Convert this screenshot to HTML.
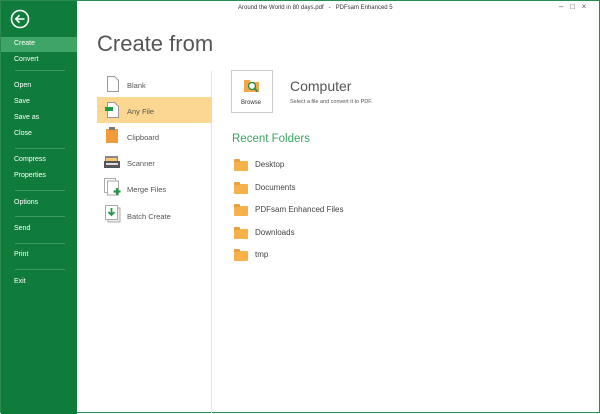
<!DOCTYPE html>
<html><head><style>
*{margin:0;padding:0;box-sizing:border-box}
body{width:600px;height:413px;overflow:hidden;font-family:"Liberation Sans",sans-serif;background:#fff;position:relative;border:1px solid #2a8a50}
.side{position:absolute;left:0;top:0;width:76px;height:413px;background:#107c3b}
.side div.i{position:absolute;left:13px;font-size:7px;color:#fff}
.sel{position:absolute;left:0;top:36px;width:76px;height:15px;background:#3fa567}
.sep{position:absolute;left:14px;width:50px;height:1px;background:#3d9863}
.t{position:absolute;font-size:7px;color:#333}
.l{position:absolute;left:126px;font-size:7.5px;color:#555}
.f{position:absolute;left:254px;font-size:8px;color:#444}
.fi{position:absolute;left:233px;width:14px;height:10px;background:#f6b24a;border-radius:1px}
.fi:before{content:"";position:absolute;left:0;top:-2px;width:6px;height:3px;background:#e9a03a;border-radius:1px 1px 0 0}
</style></head><body>
<div class="side">
<svg style="position:absolute;left:9px;top:8px" width="20" height="20" viewBox="0 0 20 20"><circle cx="10" cy="10" r="8.5" fill="none" stroke="#fff" stroke-width="1.6"/><path d="M14.5 10H6M9.5 6.3L5.8 10l3.7 3.7" fill="none" stroke="#fff" stroke-width="1.6"/></svg>
<div class="sel"></div>
<div class="i" style="top:39px">Create</div>
<div class="i" style="top:55px">Convert</div>
<div class="sep" style="top:69px"></div>
<div class="i" style="top:81px">Open</div>
<div class="i" style="top:97px">Save</div>
<div class="i" style="top:113px">Save as</div>
<div class="i" style="top:129px">Close</div>
<div class="sep" style="top:147px"></div>
<div class="i" style="top:155px">Compress</div>
<div class="i" style="top:171px">Properties</div>
<div class="sep" style="top:189px"></div>
<div class="i" style="top:198px">Options</div>
<div class="sep" style="top:215px"></div>
<div class="i" style="top:224px">Send</div>
<div class="sep" style="top:242px"></div>
<div class="i" style="top:250px">Print</div>
<div class="sep" style="top:268px"></div>
<div class="i" style="top:277px">Exit</div>
</div>
<div class="t" style="left:237px;top:4px;font-size:6px">Around the World in 80 days.pdf &nbsp;&nbsp;-&nbsp;&nbsp; PDFsam Enhanced 5</div>
<div class="t" style="left:558px;top:1px;font-size:8px;color:#555">–&nbsp;&nbsp;&nbsp;□&nbsp;&nbsp;&nbsp;×</div>
<div style="position:absolute;left:96px;top:30px;font-size:22px;color:#555">Create from</div>
<div style="position:absolute;left:210px;top:70px;width:1px;height:343px;background:#e4e4e4"></div>
<div style="position:absolute;left:96px;top:96px;width:115px;height:26px;background:#fcd791"></div>
<svg style="position:absolute;left:106px;top:75px" width="12" height="16"><path d="M.5 .5h7l4 4v11H.5z" fill="#fff" stroke="#999"/></svg>
<svg style="position:absolute;left:104px;top:101px" width="14" height="16"><path d="M2.5 .5h7l4 4v11h-11z" fill="#fff" stroke="#999"/><rect x="0" y="5" width="8" height="4" fill="#1e9a48"/></svg>
<svg style="position:absolute;left:105px;top:126px" width="12" height="16"><rect x="0" y="2" width="12" height="14" fill="#f09a3a"/><rect x="3" y="0" width="6" height="3" fill="#777"/></svg>
<svg style="position:absolute;left:103px;top:154px" width="16" height="14"><rect x="1" y="1" width="13" height="5" fill="#888"/><rect x="2" y="3" width="11" height="3" fill="#fbc36d"/><rect x="0" y="6" width="16" height="7" fill="#555"/><rect x="2" y="8" width="12" height="2" fill="#ddd"/></svg>
<svg style="position:absolute;left:103px;top:177px" width="18" height="18"><rect x=".5" y=".5" width="11" height="14" fill="#fff" stroke="#aaa"/><rect x="3.5" y="3" width="11" height="14" fill="#fff" stroke="#aaa"/><path d="M13 10v7M9.5 13.5h7" stroke="#1e9a48" stroke-width="2.2"/></svg>
<svg style="position:absolute;left:104px;top:204px" width="16" height="18"><rect x="3" y="3" width="12" height="14" fill="#eee" stroke="#aaa"/><rect x=".5" y=".5" width="12" height="14" fill="#fff" stroke="#aaa"/><path d="M6.5 3v7M3.5 7l3 3 3-3" stroke="#1e9a48" stroke-width="1.8" fill="none"/></svg>
<div class="l" style="top:80px">Blank</div>
<div class="l" style="top:106px">Any File</div>
<div class="l" style="top:132px">Clipboard</div>
<div class="l" style="top:158px">Scanner</div>
<div class="l" style="top:184px">Merge Files</div>
<div class="l" style="top:211px">Batch Create</div>
<div style="position:absolute;left:230px;top:69px;width:42px;height:43px;border:1px solid #ccc"></div>
<svg style="position:absolute;left:243px;top:77px" width="16" height="15"><path d="M0 2h6l1 2h8v10H0z" fill="#f3a94a"/><circle cx="8" cy="8" r="3.5" fill="#fff" stroke="#1e8a48" stroke-width="1.3"/><path d="M10.5 10.5l3 3" stroke="#1e8a48" stroke-width="1.6"/></svg>
<div class="t" style="left:240px;top:99px;font-size:6px">Browse</div>
<div style="position:absolute;left:289px;top:77px;font-size:14px;color:#555">Computer</div>
<div class="t" style="left:289px;top:98px;font-size:5.5px;color:#555">Select a file and convert it to PDF.</div>
<div style="position:absolute;left:231px;top:132px;font-size:11.5px;color:#3aa55f">Recent Folders</div>
<div class="fi" style="top:160px"></div><div class="f" style="top:159px">Desktop</div>
<div class="fi" style="top:183px"></div><div class="f" style="top:182px">Documents</div>
<div class="fi" style="top:205px"></div><div class="f" style="top:204px">PDFsam Enhanced Files</div>
<div class="fi" style="top:228px"></div><div class="f" style="top:227px">Downloads</div>
<div class="fi" style="top:250px"></div><div class="f" style="top:249px">tmp</div>
</body></html>
